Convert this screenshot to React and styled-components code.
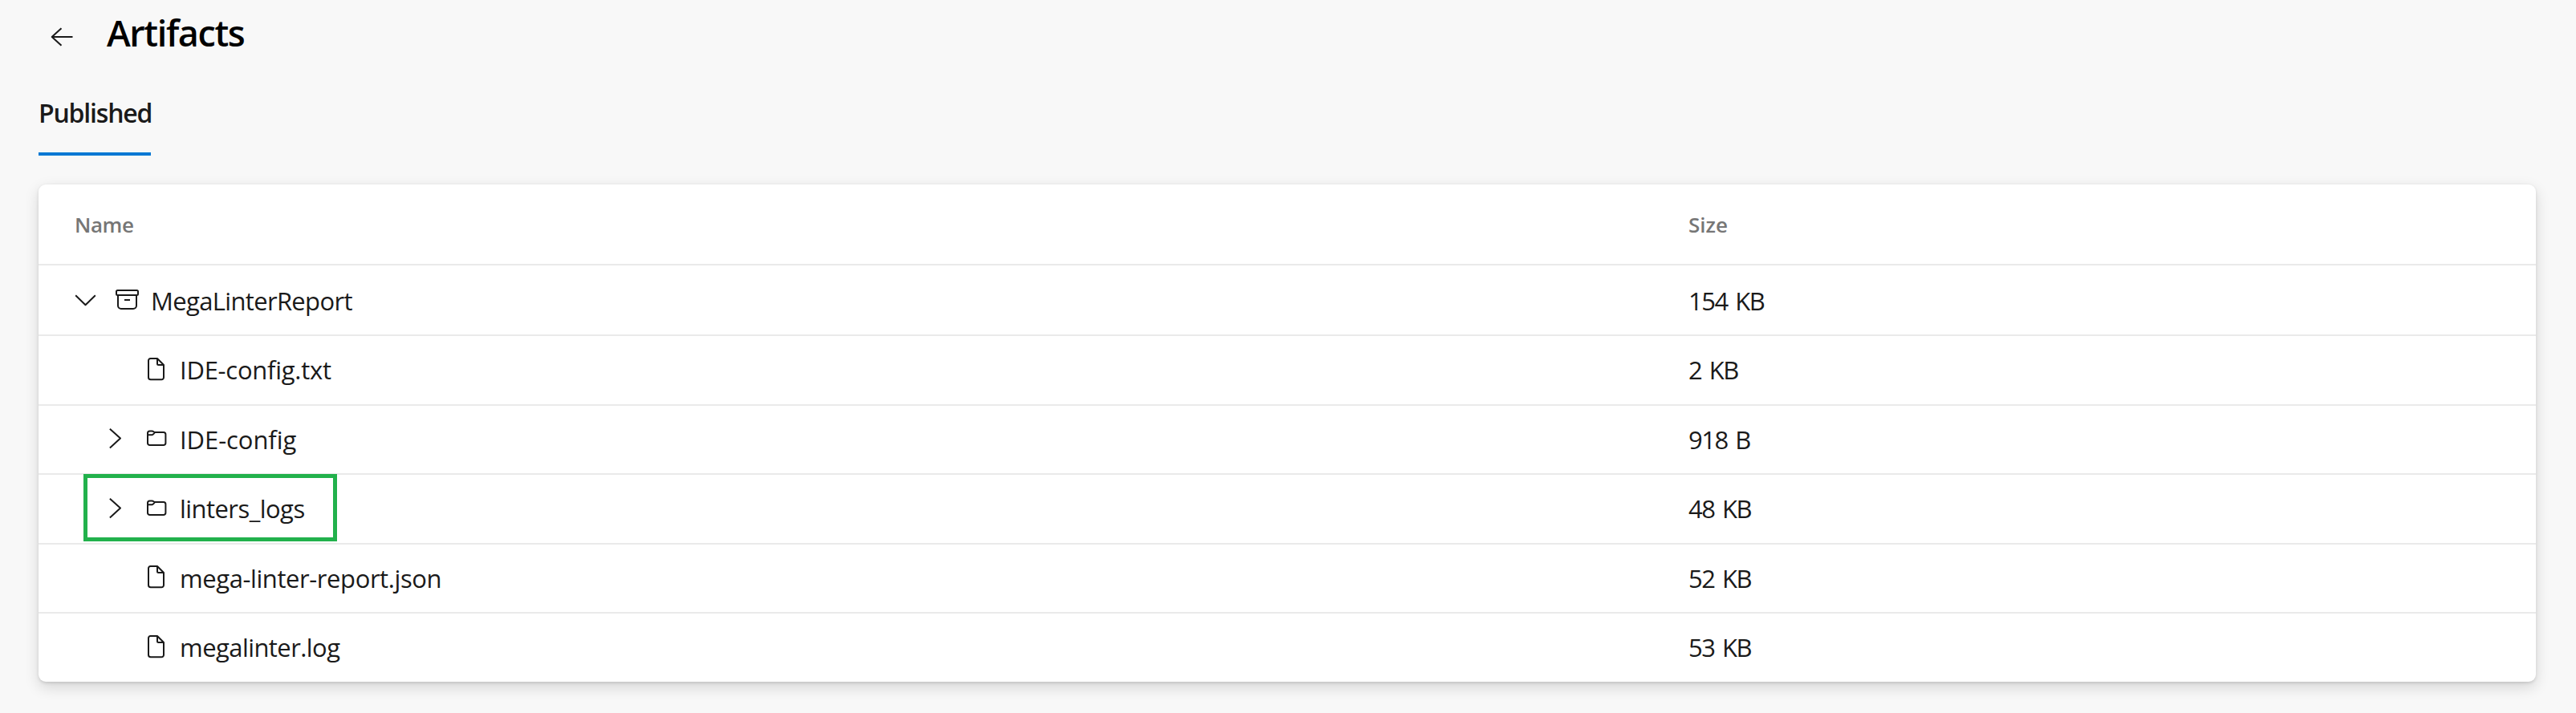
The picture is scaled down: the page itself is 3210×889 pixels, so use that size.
import React from "react";
import styled, { createGlobalStyle } from "styled-components";

const GlobalStyle = createGlobalStyle`
  * { box-sizing: border-box; }
  body {
    margin: 0;
    background: #f8f8f8;
    color: #1a1a1a;
    font-family: "Open Sans", "Noto Sans", sans-serif;
    font-size: 31px;
  }
`;

const Page = styled.main`
  display: flex;
  flex-direction: column;
  align-items: stretch;
  height: 889px;
  padding: 0 50px 0 48px;
`;

const Header = styled.header`
  display: flex;
  align-items: center;
  gap: 41px;
  height: 82px;
  padding-left: 12px;
`;

const BackButton = styled.button`
  display: flex;
  margin-top: 10px;
  padding: 0;
  border: 0;
  background: none;
  color: inherit;
`;

const Title = styled.h1`
  margin: 0;
  color: #000;
  font-size: 45px;
  font-weight: 600;
  line-height: 60px;
  letter-spacing: -1.4px;
`;

const Tabs = styled.nav`
  display: flex;
  height: 112px;
  padding-top: 28px;
`;

const Tab = styled.a`
  display: flex;
  align-items: center;
  width: 140px;
  padding-bottom: 20px;
  border-bottom: 4px solid #0078d4;
  font-size: 32px;
  font-weight: 600;
  letter-spacing: -1.2px;
  white-space: nowrap;
`;

const Card = styled.section`
  height: 620px;
  margin-top: 36px;
  border-radius: 9px;
  background: #fff;
  box-shadow: 0 6.4px 18px rgba(0, 0, 0, 0.14), 0 1.2px 3.6px rgba(0, 0, 0, 0.108);
`;

const Columns = styled.div`
  display: grid;
  grid-template-columns: 2056px 1fr;
  align-items: center;
`;

const HeadRow = styled(Columns)`
  height: 99px;
  color: #767676;
  font-size: 26px;
  font-weight: 600;
`;

const HeadCell = styled.div`
  padding-left: ${(p) => p.$indent || 0}px;
  letter-spacing: ${(p) => p.$tracking || 0}px;
`;

const Row = styled(Columns)`
  position: relative;
  height: ${(p) => p.$height}px;
  padding-top: ${(p) => (p.$root ? 2 : 0)}px;
  border-top: 2px solid #eaeaea;
`;

const NameCell = styled.div`
  display: flex;
  align-items: center;
  padding-left: ${(p) => 44 + p.$level * 36}px;
`;

const Slot = styled.span`
  display: flex;
  flex: none;
  width: ${(p) => p.$width}px;
  height: 32px;
`;

const Label = styled.span`
  padding-bottom: 1px;
  font-weight: 380;
  line-height: 42px;
  letter-spacing: ${(p) => p.$tracking}px;
  white-space: nowrap;
`;

const SizeLabel = styled(Label)`
  word-spacing: 3px;
`;

const Highlight = styled.div`
  position: absolute;
  top: -1px;
  left: 56px;
  width: 316px;
  height: 84px;
  border: 5px solid #22b14c;
`;

const Glyph = styled.svg`
  display: block;
  flex: none;
  overflow: visible;
  fill: none;
  stroke: currentColor;
  stroke-width: 2;
  stroke-linejoin: round;
`;

const BackIcon = () => (
  <Glyph width="32" height="32" viewBox="0 0 32 32">
    <path d="M30.5 16H4.5M16.5 5.2 4.7 16l11.8 10.8" />
  </Glyph>
);

const ChevronDown = () => (
  <Glyph width="28" height="32" viewBox="0 0 28 32">
    <path d="M2.2 9.2 14.5 21.2 26.8 9.2" />
  </Glyph>
);

const ChevronRight = () => (
  <Glyph width="28" height="32" viewBox="0 0 28 32">
    <path d="M8.9 2.7 22 14.6 8.9 26.6" />
  </Glyph>
);

const ArchiveIcon = () => (
  <Glyph width="32" height="32" viewBox="0 0 32 32">
    <rect x="3" y="3" width="27" height="6" rx="1.5" />
    <path d="M5 9v13a4 4 0 0 0 4 4h15a4 4 0 0 0 4-4V9M13 15h7" />
  </Glyph>
);

const FileIcon = () => (
  <Glyph width="32" height="32" viewBox="0 0 32 32">
    <path d="M9.5 1H18l8 8v15.500a2.800 2.800 0 0 1-2.800 2.800H9.800A2.800 2.800 0 0 1 7 24.500v-21A2.500 2.500 0 0 1 9.500 1ZM18 1v6.500a1.500 1.500 0 0 0 1.500 1.500H26" />
  </Glyph>
);

const FolderIcon = () => (
  <Glyph width="32" height="32" viewBox="0 0 32 32">
    <path d="M6 8a2.600 2.600 0 0 1 2.600-2.600h3c1.400 0 2.200 1.600 3.600 1.600h10.600a2.600 2.600 0 0 1 2.600 2.600v10.800a2.600 2.600 0 0 1-2.600 2.600H8.600A2.600 2.600 0 0 1 6 20.400ZM6 10.300h5.400c1.600 0 2.400-2.400 4-3.300" />
  </Glyph>
);

const ICONS = { archive: ArchiveIcon, file: FileIcon, folder: FolderIcon };

const ITEMS = [
  { name: "MegaLinterReport", size: "154 KB", icon: "archive", level: 0, open: true, height: 88, tracking: -0.66, sizeTracking: -1.5 },
  { name: "IDE-config.txt", size: "2 KB", icon: "file", level: 1, height: 87, tracking: -0.26, sizeTracking: -1.5 },
  { name: "IDE-config", size: "918 B", icon: "folder", level: 1, open: false, height: 86, tracking: -0.07, sizeTracking: -1.5 },
  { name: "linters_logs", size: "48 KB", icon: "folder", level: 1, open: false, height: 87, tracking: -0.55, sizeTracking: -1.5, highlight: true },
  { name: "mega-linter-report.json", size: "52 KB", icon: "file", level: 1, height: 86, tracking: -0.42, sizeTracking: -1.5 },
  { name: "megalinter.log", size: "53 KB", icon: "file", level: 1, height: 87, tracking: -0.57, sizeTracking: -1.5 },
];

function TreeRow({ item }) {
  const Icon = ICONS[item.icon];
  return (
    <Row $height={item.height} $root={item.level === 0}>
      <NameCell $level={item.level}>
        <Slot $width={50}>
          {item.open === true && <ChevronDown />}
          {item.open === false && <ChevronRight />}
        </Slot>
        <Slot $width={46}>
          <Icon />
        </Slot>
        <Label $tracking={item.tracking}>{item.name}</Label>
      </NameCell>
      <SizeLabel $tracking={item.sizeTracking}>{item.size}</SizeLabel>
      {item.highlight && <Highlight />}
    </Row>
  );
}

export default function App() {
  return (
    <>
      <GlobalStyle />
      <Page>
        <Header>
          <BackButton aria-label="Back">
            <BackIcon />
          </BackButton>
          <Title>Artifacts</Title>
        </Header>
        <Tabs>
          <Tab>Published</Tab>
        </Tabs>
        <Card>
          <HeadRow>
            <HeadCell $indent={45} $tracking={-0.43}>Name</HeadCell>
            <HeadCell>Size</HeadCell>
          </HeadRow>
          {ITEMS.map((item) => (
            <TreeRow key={item.name} item={item} />
          ))}
        </Card>
      </Page>
    </>
  );
}
